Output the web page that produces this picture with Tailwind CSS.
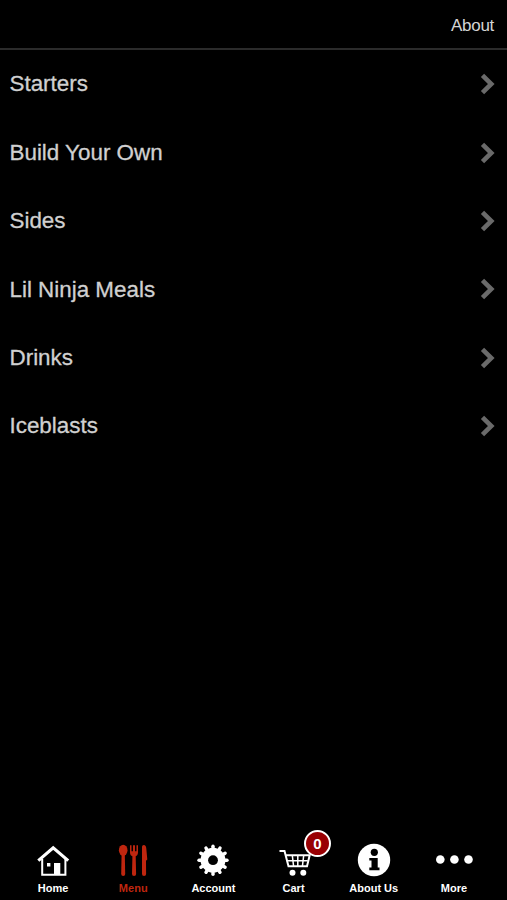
<!DOCTYPE html>
<html lang="en">
<head>
    <meta charset="UTF-8">
    <meta name="viewport" content="width=device-width, initial-scale=1.0">
    <title>Menu</title>
    <script src="https://cdn.jsdelivr.net/npm/@tailwindcss/browser@4"></script>
</head>
<body class="bg-black font-['Liberation_Sans',Arial,sans-serif]">
    <div class="flex flex-col h-screen overflow-hidden">
        <header class="flex items-center justify-end h-[50px] px-[13px] pt-1 border-b-2 border-[#2b2b2b] shrink-0">
            <a href="#" class="text-[17px] tracking-[-0.3px] text-[#d4d4d4]">About</a>
        </header>

        <main class="flex-1">
            <ul id="menu-list">
                <!-- Menu categories will be inserted here -->
            </ul>
        </main>

        <nav class="grid grid-cols-6 px-[13px] pb-[5px] text-white text-[11px] leading-[14px] font-bold text-center shrink-0">
            <a href="#" class="flex flex-col items-center gap-[4px]">
                <svg class="size-[34px]" viewBox="0 0 34 34" fill="none" stroke="currentColor">
                    <path d="M2.3 17.6 17.2 4.8l15 12.8" stroke-width="3.2"/>
                    <path d="M6.2 16v15.7h23.2V16" stroke-width="2"/>
                    <path d="M18 20h6.3v12H18zM11 20h3.4v3.5H11z" fill="currentColor" stroke="none"/>
                </svg>
                <span>Home</span>
            </a>
            <a href="#" class="flex flex-col items-center gap-[4px] text-[#bf260f]">
                <svg class="size-[34px]" viewBox="0 0 34 34" fill="currentColor">
                    <ellipse cx="7.2" cy="7.3" rx="4.3" ry="5.6"/>
                    <path d="M5.6 11h3.2l.4 20a2 2 0 0 1-4 0z"/>
                    <path d="M14 2.2h1.5v6H17v-6h2v6h1.500v-6H22v7.300c0 2-1 3.300-2.300 3.800l.4 17.700a2 2 0 0 1-4.100 0l.4-17.700c-1.500-.5-2.400-1.800-2.400-3.800z"/>
                    <path d="M26 4c0-1.300.8-2 1.800-2 1.600 0 2.300 1.400 2.500 3.500l1 11-1.300 1.300.1 13.200a2 2 0 0 1-4.100 0z"/>
                </svg>
                <span class="tracking-[0.1px] font-semibold">Menu</span>
            </a>
            <a href="#" class="flex flex-col items-center gap-[4px]">
                <svg class="size-[34px]" viewBox="0 0 34 34">
                    <g stroke="currentColor" stroke-width="3.4" stroke-linecap="round">
                        <path d="M17 3.2v28"/>
                        <path d="M17 3.2v28" transform="rotate(30 17 17.2)"/>
                        <path d="M17 3.2v28" transform="rotate(60 17 17.2)"/>
                        <path d="M17 3.2v28" transform="rotate(90 17 17.2)"/>
                        <path d="M17 3.2v28" transform="rotate(120 17 17.2)"/>
                        <path d="M17 3.2v28" transform="rotate(150 17 17.2)"/>
                    </g>
                    <circle cx="17" cy="17.2" r="12.4" fill="currentColor"/>
                    <circle cx="17" cy="17.2" r="4.9" fill="#000"/>
                </svg>
                <span>Account</span>
            </a>
            <a href="#" class="relative flex flex-col items-center gap-[4px]">
                <svg class="size-[34px]" viewBox="0 0 34 34" fill="none" stroke="currentColor">
                    <path d="M2.500 8h5l4 15.300H30l2.700-11H8.500" stroke-width="2"/>
                    <path d="M9.800 17.800h21M15.300 12.300l1.300 11M20.800 12.300v11M26.700 12.300l-1.300 11" stroke-width="1.500"/>
                    <circle cx="15.500" cy="29.700" r="3" fill="currentColor" stroke="none"/>
                    <circle cx="26.300" cy="29.700" r="3" fill="currentColor" stroke="none"/>
                </svg>
                <span>Cart</span>
                <span class="absolute left-[50.5px] -top-[13px] flex items-center justify-center size-[27px] pt-px rounded-full border-[2.5px] border-white bg-[#990003] text-[15px]">0</span>
            </a>
            <a href="#" class="flex flex-col items-center gap-[4px]">
                <svg class="size-[34px]" viewBox="0 0 34 34">
                    <circle cx="17" cy="17" r="16.200" fill="currentColor"/>
                    <circle cx="17.300" cy="9.300" r="3.600" fill="#000"/>
                    <path d="M12.300 15h8.400v9.600h1.800v2.700H12.300v-2.700h2.200v-7h-2.200z" fill="#000"/>
                </svg>
                <span>About Us</span>
            </a>
            <a href="#" class="flex flex-col items-center gap-[4px]">
                <svg class="w-[40px] h-[34px]" viewBox="0 0 40 34" fill="currentColor">
                    <circle cx="6.300" cy="16.500" r="4.300"/>
                    <circle cx="20.400" cy="16.500" r="4.300"/>
                    <circle cx="34.500" cy="16.500" r="4.300"/>
                </svg>
                <span>More</span>
            </a>
        </nav>
    </div>

    <script>
        const categories = ['Starters', 'Build Your Own', 'Sides', 'Lil Ninja Meals', 'Drinks', 'Iceblasts'];

        document.getElementById('menu-list').innerHTML = categories.map(name => `
            <li class="flex items-center justify-between h-[68.4px] pl-[9.5px] pr-[12px] text-[22.4px] text-[#d0d0d0]">
                <span class="[-webkit-text-stroke:0.3px_#d0d0d0]">${name}</span>
                <svg class="w-[15px] h-[22px]" viewBox="0 0 15 22" fill="none" stroke="#6a6a6a" stroke-width="4.6">
                    <path d="M2.5 2.300 11.300 11 2.500 19.700"/>
                </svg>
            </li>
        `).join('');
    </script>
</body>
</html>
